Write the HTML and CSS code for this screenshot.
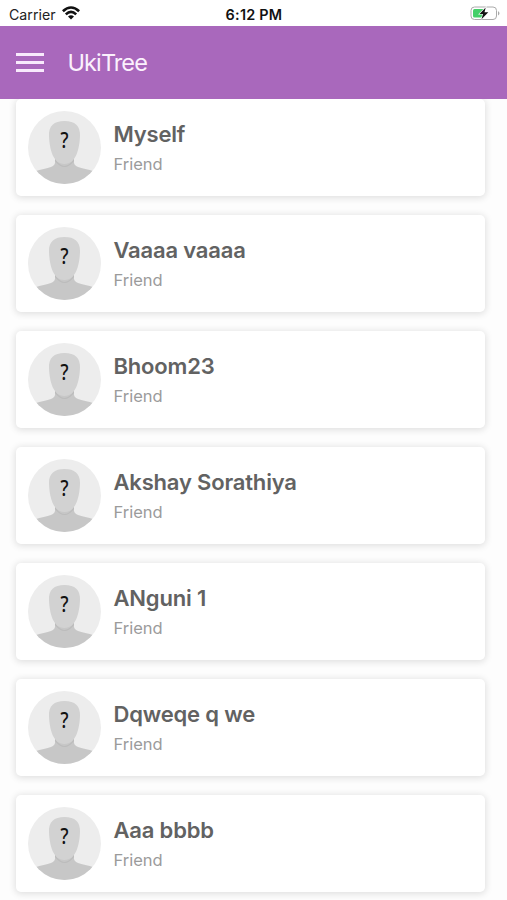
FILE: index.html
```html
<!DOCTYPE html>
<html lang="en">
<head>
<meta charset="utf-8">
<title>UkiTree</title>
<link rel="stylesheet" href="styles.css">
</head>
<body>
<svg class="defs" width="0" height="0" aria-hidden="true">
  <defs>
    <clipPath id="disc"><circle cx="36.5" cy="36.5" r="36.5"/></clipPath>
    <symbol id="person" viewBox="0 0 73 73">
      <g clip-path="url(#disc)">
        <rect width="73" height="73" fill="#ededed"/>
        <path d="M27 43V52C26 57 17 57 8 60V73H65V60C56 57 47 57 46 52V43Z" fill="#c7c7c7"/>
        <path d="M27 48Q36.500 62 46 48V50Q36.500 62 27 50Z" fill="#bcbcbc"/>
        <path d="M36.500 10C26 10 20.500 15 21 25C21.500 38 25 53 36.500 53C48 53 51.500 38 52 25C52.500 15 47 10 36.500 10Z" fill="#d2d2d2"/>
      </g>
    </symbol>
  </defs>
</svg>
<div class="status">
  <div class="carrier"><span>Carrier</span>
    <svg width="18" height="14" viewBox="0 0 18 14"><g fill="none" stroke="#111" stroke-width="2.600"><path d="M.9 5.300Q9-2.300 17.100 5.300"/><path d="M3.800 8.400Q9 3.500 14.200 8.400"/></g><path d="M6 10.600Q9 8.100 12 10.600L9 13.600Z" fill="#111"/></svg>
  </div>
  <div class="time">6:12 PM</div>
  <svg class="battery" width="31" height="15" viewBox="0 0 31 15"><rect x="1" y="1" width="25.500" height="12.500" rx="3.500" fill="#fff" stroke="#aaa"/><path d="M28 5Q31 7.300 28 9.500Z" fill="#aaa"/><rect x="3" y="3" width="11.500" height="8.500" rx="1.500" fill="#43cf68"/><path d="M15.700 1.500L9.500 8H13L11.500 13.200L18.300 6.300H14.500Z" fill="#111" stroke="#fff" stroke-width="1.200" paint-order="stroke"/></svg>
</div>
<header class="bar">
  <div class="menu"><i></i><i></i><i></i></div>
  <h1>UkiTree</h1>
</header>
<main class="list">
  <article class="card"><div class="avatar"><svg><use href="#person"/></svg><b>?</b></div><div class="info"><h2>Myself</h2><p>Friend</p></div></article>
  <article class="card"><div class="avatar"><svg><use href="#person"/></svg><b>?</b></div><div class="info"><h2>Vaaaa vaaaa</h2><p>Friend</p></div></article>
  <article class="card"><div class="avatar"><svg><use href="#person"/></svg><b>?</b></div><div class="info"><h2>Bhoom23</h2><p>Friend</p></div></article>
  <article class="card"><div class="avatar"><svg><use href="#person"/></svg><b>?</b></div><div class="info"><h2>Akshay Sorathiya</h2><p>Friend</p></div></article>
  <article class="card"><div class="avatar"><svg><use href="#person"/></svg><b>?</b></div><div class="info"><h2>ANguni 1</h2><p>Friend</p></div></article>
  <article class="card"><div class="avatar"><svg><use href="#person"/></svg><b>?</b></div><div class="info"><h2>Dqweqe q we</h2><p>Friend</p></div></article>
  <article class="card"><div class="avatar"><svg><use href="#person"/></svg><b>?</b></div><div class="info"><h2>Aaa bbbb</h2><p>Friend</p></div></article>
</main>
</body>
</html>
```
FILE: styles.css
```css
* { box-sizing: border-box; margin: 0; padding: 0; }
body { height: 900px; overflow: hidden; background: #fdfdfd; font-family: Inter, "Liberation Sans", sans-serif; display: flex; flex-direction: column; }
.defs { position: absolute; }
.status { height: 25.500px; flex: none; display: grid; grid-template-columns: 1fr auto 1fr; align-items: center; padding: 0 6px 0 9px; background: #fff; color: #222; position: relative; z-index: 2; }
.carrier { display: flex; align-items: center; gap: 6px; font-size: 14.200px; line-height: 25px; padding-top: 2px; }
.carrier svg { margin-top: -3px; }
.time { font-size: 14.400px; font-weight: 600; letter-spacing: .25px; line-height: 25px; padding-top: 2px; margin-right: 2px; color: #111; }
.battery { justify-self: end; }
.bar { height: 73px; flex: none; display: flex; align-items: center; gap: 24px; padding-left: 15.500px; background: #a968bc; color: #fff; position: relative; z-index: 2; }
.menu { display: flex; flex-direction: column; gap: 5px; width: 28px; }
.menu i { height: 3px; background: #f8eafc; }
.bar h1 { font-size: 23.500px; font-weight: 400; letter-spacing: -.9px; line-height: 30px; padding-top: 1px; color: #fbf1fd; }
.list { padding: 0 22px 0 15.500px; display: flex; flex-direction: column; gap: 18.500px; }
.card { height: 97.500px; flex: none; display: flex; align-items: center; gap: 13px; padding-left: 12px; background: #fff; border-radius: 5px; box-shadow: 0 1px 7px 1px rgba(0, 0, 0, .12); }
.avatar { width: 73px; height: 73px; display: grid; }
.avatar svg { grid-area: 1 / 1; width: 73px; height: 73px; }
.avatar b { grid-area: 1 / 1; position: relative; text-align: center; font: 500 21px/24px "Noto Sans", sans-serif; transform: scaleX(.85); padding-top: 17px; color: #111; }
.info h2 { font-size: 22px; font-weight: 600; letter-spacing: -.18px; line-height: 28px; color: #626262; white-space: nowrap; }
.info p { font-size: 16.500px; line-height: 22px; color: #9b9b9b; margin-top: 5px; }
```
